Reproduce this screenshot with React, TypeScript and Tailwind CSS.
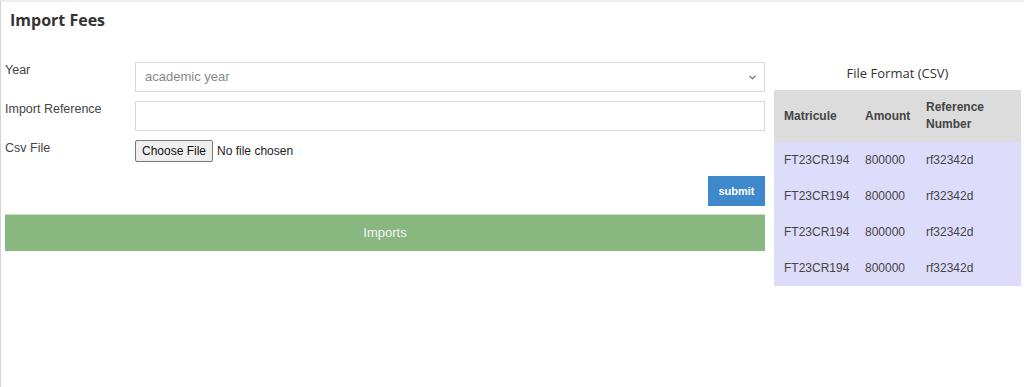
import { ChevronDown } from 'lucide-react';

const ROWS = [
  { matricule: 'FT23CR194', amount: '800000', ref: 'rf32342d' },
  { matricule: 'FT23CR194', amount: '800000', ref: 'rf32342d' },
  { matricule: 'FT23CR194', amount: '800000', ref: 'rf32342d' },
  { matricule: 'FT23CR194', amount: '800000', ref: 'rf32342d' },
];

export default function App() {
  return (
    <div className="h-[387px] w-full bg-white border-t-2 border-[#eeeeee] border-l border-l-[#d4d4d4] font-['Liberation_Sans',Arial,sans-serif] text-[#444]">
      {/* Header */}
      <div className="h-[58px] pl-[9px] pt-[7px]">
        <h1 className="font-['Open_Sans',sans-serif] font-bold text-[16px] text-[#333] leading-[22px]">
          Import Fees
        </h1>
      </div>

      <div className="flex gap-[9px] pl-[4px] pr-[3px]">
        {/* Form */}
        <form className="w-[760px] flex flex-col" onSubmit={(e) => e.preventDefault()}>
          <div className="flex h-[30px] mt-[2px]">
            <label className="w-[130px] text-[12.5px] leading-[16px]">Year</label>
            <div className="relative flex-1">
              <select
                defaultValue=""
                className="appearance-none w-full h-[30px] border border-[#d9d9d9] bg-white pl-[9px] text-[13px] text-[#888] outline-none"
              >
                <option value="">academic year</option>
                <option value="2023">2023/2024</option>
              </select>
              <ChevronDown
                className="absolute right-[7px] top-[10px] h-[11px] w-[11px] text-[#666] pointer-events-none"
                strokeWidth={2.5}
              />
            </div>
          </div>

          <div className="flex h-[30px] mt-[9px]">
            <label className="w-[130px] text-[12.5px] leading-[16px]">Import Reference</label>
            <input
              type="text"
              className="flex-1 h-[30px] border border-[#d9d9d9] bg-white px-[9px] text-[13px] outline-none"
            />
          </div>

          <div className="flex h-[22px] mt-[9px]">
            <label className="w-[130px] text-[12.5px] leading-[16px]">Csv File</label>
            <input
              type="file"
              accept=".csv"
              className="text-[12px] text-[#222] file:h-[22px] file:border file:border-[#767676] file:rounded-[2px] file:bg-[#efefef] file:px-[6px] file:mr-[4px] file:text-[#111] file:text-[12px]"
            />
          </div>

          <div className="flex justify-end mt-[14px]">
            <button
              type="submit"
              className="h-[30px] w-[57px] bg-[#3f88cb] text-white text-[11px] font-bold"
            >
              submit
            </button>
          </div>

          <button
            type="button"
            className="mt-[8px] h-[37px] w-full bg-[#88b77f] text-[#f4f4f4] text-[13px] border-t border-[#c8dfc3]"
          >
            Imports
          </button>
        </form>

        {/* File format */}
        <div className="flex-1">
          <p className="font-['Open_Sans',sans-serif] text-[13px] text-[#333] text-center h-[30px] pt-[4px]">
            File Format (CSV)
          </p>
          <table className="w-full text-[12px] text-left">
            <thead className="bg-[#dcdcdc]">
              <tr className="h-[52px] text-[#444]">
                <th className="w-[81px] pl-[10px] font-bold">Matricule</th>
                <th className="w-[61px] pl-[10px] font-bold">Amount</th>
                <th className="pl-[10px] pr-[10px] font-bold leading-[17px]">
                  Reference
                  <br />
                  Number
                </th>
              </tr>
            </thead>
            <tbody className="bg-[#dedcfb]">
              {ROWS.map((row, i) => (
                <tr key={i} className="h-[36px]">
                  <td className="pl-[10px]">{row.matricule}</td>
                  <td className="pl-[10px]">{row.amount}</td>
                  <td className="pl-[10px]">{row.ref}</td>
                </tr>
              ))}
            </tbody>
          </table>
        </div>
      </div>
    </div>
  );
}
